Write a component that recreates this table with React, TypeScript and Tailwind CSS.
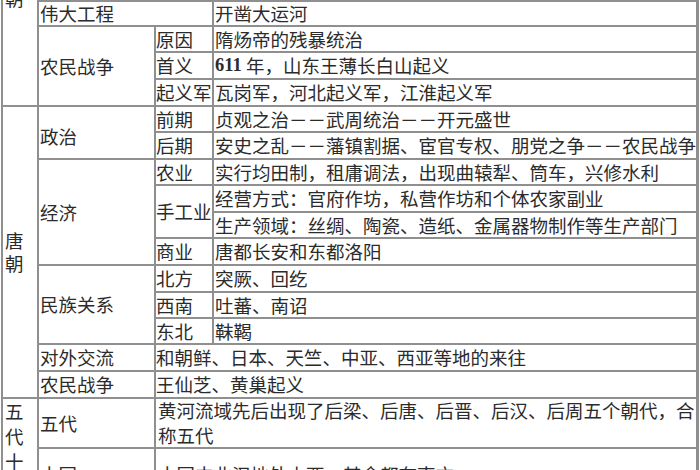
import React from 'react';

const font = { fontFamily: '"Noto Sans CJK SC", "Liberation Serif", serif' };

function Cell({ className = '', children }: { className?: string; children?: React.ReactNode }) {
  return (
    <div className={`bg-white flex items-center whitespace-nowrap overflow-visible ${className}`}>
      {children}
    </div>
  );
}

export default function App() {
  return (
    <div className="w-[700px] h-[470px] overflow-hidden bg-white text-[#2b2b2b] text-[18.5px] leading-[25px]" style={font}>
      <div className="ml-[1px] w-[698px] grid grid-cols-[34px_115px_56px_482px] grid-rows-[23px_24px_25px_25px_24px_25px_24px_25px_24px_25px_25px_24px_24px_25px_25px_48px_50px] gap-[2px] p-[2px] bg-[#8f8f8f]">
        {/* 隋朝 */}
        <div className="col-start-1 row-start-1 row-span-4 bg-white -mt-[2px] pl-[2px]">
          <div className="-mt-[14px]">朝</div>
        </div>
        <Cell className="col-start-2 col-span-2 row-start-1 pl-[1px]">伟大工程</Cell>
        <Cell className="col-start-4 row-start-1 pl-[1px]">开凿大运河</Cell>

        <Cell className="col-start-2 row-start-2 row-span-3 pl-[1px]">农民战争</Cell>
        <Cell className="col-start-3 row-start-2">原因</Cell>
        <Cell className="col-start-4 row-start-2 pl-[1px]">隋炀帝的残暴统治</Cell>
        <Cell className="col-start-3 row-start-3">首义</Cell>
        <Cell className="col-start-4 row-start-3 pl-[1px]">
          <span className="font-bold" style={{ fontFamily: '"Liberation Serif", serif' }}>611</span>
          <span>&nbsp;年，山东王薄长白山起义</span>
        </Cell>
        <Cell className="col-start-3 row-start-4">起义军</Cell>
        <Cell className="col-start-4 row-start-4 pl-[1px]">瓦岗军，河北起义军，江淮起义军</Cell>

        {/* 唐朝 */}
        <Cell className="col-start-1 row-start-5 row-span-11 pl-[2px]">
          <div className="flex flex-col leading-[23px]">
            <span>唐</span>
            <span>朝</span>
          </div>
        </Cell>

        <Cell className="col-start-2 row-start-5 row-span-2 pl-[1px] pt-[8px]">政治</Cell>
        <Cell className="col-start-3 row-start-5">前期</Cell>
        <Cell className="col-start-4 row-start-5 pl-[1px]">贞观之治－－武周统治－－开元盛世</Cell>
        <Cell className="col-start-3 row-start-6">后期</Cell>
        <Cell className="col-start-4 row-start-6 pl-[1px]">安史之乱－－藩镇割据、宦官专权、朋党之争－－农民战争</Cell>

        <Cell className="col-start-2 row-start-7 row-span-4 pl-[1px]">经济</Cell>
        <Cell className="col-start-3 row-start-7">农业</Cell>
        <Cell className="col-start-4 row-start-7 pl-[1px]">实行均田制，租庸调法，出现曲辕犁、筒车，兴修水利</Cell>
        <Cell className="col-start-3 row-start-8 row-span-2">手工业</Cell>
        <Cell className="col-start-4 row-start-8 pl-[1px]">经营方式：官府作坊，私营作坊和个体农家副业</Cell>
        <Cell className="col-start-4 row-start-9 pl-[1px]">生产领域：丝绸、陶瓷、造纸、金属器物制作等生产部门</Cell>
        <Cell className="col-start-3 row-start-10">商业</Cell>
        <Cell className="col-start-4 row-start-10 pl-[1px]">唐都长安和东都洛阳</Cell>

        <Cell className="col-start-2 row-start-11 row-span-3 pl-[1px]">民族关系</Cell>
        <Cell className="col-start-3 row-start-11">北方</Cell>
        <Cell className="col-start-4 row-start-11 pl-[1px]">突厥、回纥</Cell>
        <Cell className="col-start-3 row-start-12">西南</Cell>
        <Cell className="col-start-4 row-start-12 pl-[1px]">吐蕃、南诏</Cell>
        <Cell className="col-start-3 row-start-13">东北</Cell>
        <Cell className="col-start-4 row-start-13 pl-[1px]">靺鞨</Cell>

        <Cell className="col-start-2 row-start-14 pl-[1px]">对外交流</Cell>
        <Cell className="col-start-3 col-span-2 row-start-14">和朝鲜、日本、天竺、中亚、西亚等地的来往</Cell>
        <Cell className="col-start-2 row-start-15 pl-[1px]">农民战争</Cell>
        <Cell className="col-start-3 col-span-2 row-start-15">王仙芝、黄巢起义</Cell>

        {/* 五代十国 */}
        <div className="col-start-1 row-start-16 row-span-2 bg-white pl-[2px] flex flex-col">
          <span>五</span>
          <span>代</span>
          <span>十</span>
          <span>国</span>
        </div>
        <Cell className="col-start-2 row-start-16 pl-[1px]">五代</Cell>
        <Cell className="col-start-3 col-span-2 row-start-16 pl-[2px]">
          <div>
            黄河流域先后出现了后梁、后唐、后晋、后汉、后周五个朝代，合
            <br />
            称五代
          </div>
        </Cell>
        <Cell className="col-start-2 row-start-17 pl-[1px]">十国</Cell>
        <Cell className="col-start-3 col-span-2 row-start-17 pl-[2px]">十国中北汉地处山西，其余都在南方</Cell>
      </div>
    </div>
  );
}
